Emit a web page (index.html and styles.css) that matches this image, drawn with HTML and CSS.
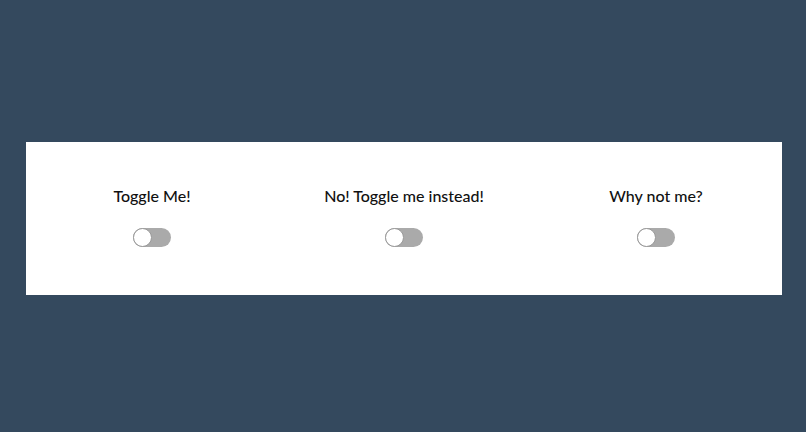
FILE: index.html
```html
<!DOCTYPE html>
<html lang="en">
<head>
  <meta charset="UTF-8">
  <title>Toggles</title>
  <link rel="stylesheet" href="styles.css">
</head>
<body>

<div class="card">
  <div class="item">
    <h3>Toggle Me!</h3>
    <label class="switch"><input type="checkbox"><span class="slider"></span></label>
  </div>
  <div class="item">
    <h3>No! Toggle me instead!</h3>
    <label class="switch"><input type="checkbox"><span class="slider"></span></label>
  </div>
  <div class="item">
    <h3>Why not me?</h3>
    <label class="switch"><input type="checkbox"><span class="slider"></span></label>
  </div>
</div>

</body>
</html>
```

FILE: styles.css
```css
body {
  margin: 0;
  padding: 142px 24px 0 26px;
  background: #34495e;
  font-family: Lato, "Noto Sans", sans-serif;
}
.card {
  background: #fff;
  display: grid;
  grid-template-columns: repeat(3, 1fr);
  padding: 44px 0 48px;
}
.item {
  display: flex;
  flex-direction: column;
  align-items: center;
}
h3 {
  margin: 0 0 23px;
  font-size: 16px;
  font-weight: 500;
  color: #111;
}
.switch {
  position: relative;
  display: block;
  width: 38px;
  height: 19px;
}
.switch input {
  display: none;
}
.slider {
  position: absolute;
  inset: 0;
  background: #aaa;
  border-radius: 10px;
  cursor: pointer;
}
.slider::before {
  content: "";
  position: absolute;
  left: 0;
  top: 0;
  width: 17px;
  height: 17px;
  border: 1px solid #999;
  border-radius: 50%;
  background: #fff;
}
input:checked + .slider {
  background: #2980b9;
}
input:checked + .slider::before {
  transform: translateX(19px);
}
```
